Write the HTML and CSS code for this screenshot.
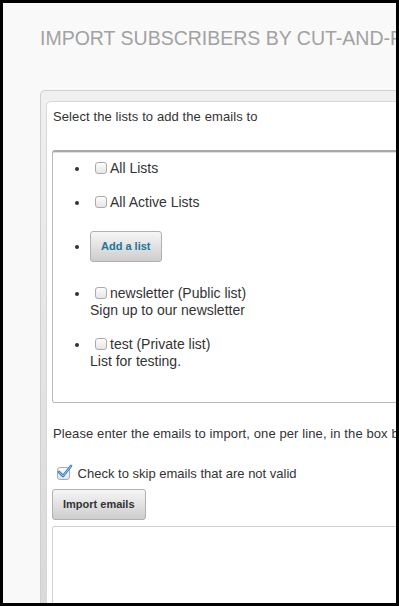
FILE: index.html
```html
<!DOCTYPE html>
<html lang="en">
<head>
	<meta charset="UTF-8">
	<title>Import subscribers</title>
	<link rel="stylesheet" href="styles.css">
</head>
<body>
	<div class="page">
		<h2 class="title">IMPORT SUBSCRIBERS BY CUT-AND-PASTE</h2>
		<div class="panel">
			<div class="inner">
				<p class="intro">Select the lists to add the emails to</p>
				<div class="lists">
					<ul>
						<li><span class="cb"></span>All Lists</li>
						<li><span class="cb"></span>All Active Lists</li>
						<li class="add"><span class="btn blue">Add a list</span></li>
						<li><span class="cb"></span>newsletter (Public list)<br>Sign up to our newsletter</li>
						<li><span class="cb"></span>test (Private list)<br>List for testing.</li>
					</ul>
				</div>
				<p class="hint">Please enter the emails to import, one per line, in the box below and click "Import emails".</p>
				<div class="skip">
					<span class="cb on">
						<svg width="16" height="15" viewBox="0 0 16 15"><path d="M2 8 L6 12 L14 2" fill="none" stroke="#3b7fd0" stroke-width="2.6" stroke-linecap="round" stroke-linejoin="round"/><path d="M2 8 L6 12 L14 2" fill="none" stroke="#9cc6f0" stroke-width="0.9" stroke-linecap="round"/></svg>
					</span>
					Check to skip emails that are not valid
				</div>
				<span class="btn">Import emails</span>
				<div class="area"></div>
			</div>
		</div>
	</div>
</body>
</html>
```

FILE: styles.css
```css
* {
	margin: 0;
	padding: 0;
	box-sizing: border-box;
}
html, body {
	background: #000;
}
body {
	padding: 3px;
	font-family: "Liberation Sans", Arial, sans-serif;
	color: #333;
}
.page {
	height: 600px;
	background: #f9f9f9;
	overflow: hidden;
	padding: 24px 0 0 37px;
}
.title {
	font-size: 19.5px;
	font-weight: normal;
	color: #a2a2a2;
	line-height: 22px;
	white-space: nowrap;
	height: 63px;
}
.panel {
	width: 600px;
	height: 540px;
	border: 1px solid #cfcfcf;
	border-radius: 5px;
	background: linear-gradient(#f0f0f0, #d8d8d8);
	padding: 10px 0 0 5px;
}
.inner {
	height: 600px;
	background: #fff;
	border: 1px solid #d8d8d8;
	border-radius: 5px;
	padding: 7px 0 0 6px;
}
.intro, .hint {
	font-size: 13px;
	line-height: 16px;
	letter-spacing: 0.1px;
	white-space: nowrap;
}
.lists {
	margin: 25px 0 0 -1px;
	border: 1px solid #b8b8b8;
	border-top: 2px solid #a8a8a8;
	border-radius: 3px;
	box-shadow: inset 0 1px 0 #e0e0e0;
	padding: 8px 0 32px 37px;
	font-size: 14px;
	line-height: 17px;
}
.lists li {
	margin-bottom: 17px;
}
.lists li:last-child {
	margin-bottom: 0;
}
.lists li.add {
	margin-top: 20px;
	margin-bottom: 23px;
	height: 31px;
	line-height: 31px;
}
.cb {
	display: inline-block;
	width: 12px;
	height: 12px;
	margin: 0 3px 0 5px;
	border: 1px solid #ababab;
	border-radius: 3px;
	background: linear-gradient(#fcfcfc, #e6e6e6);
	vertical-align: -1px;
	position: relative;
}
.btn {
	display: inline-block;
	height: 31px;
	line-height: 29px;
	padding: 0 10px;
	border: 1px solid #b0b0b0;
	border-radius: 3px;
	background: linear-gradient(#f6f6f6, #cdcdcd);
	font-size: 11px;
	font-weight: bold;
	color: #333;
	vertical-align: top;
}
.btn.blue {
	color: #21759b;
}
.hint {
	margin-top: 23px;
}
.skip {
	margin-top: 24px;
	font-size: 13px;
	line-height: 16px;
	padding-left: 4px;
	white-space: nowrap;
}
.cb.on {
	width: 13px;
	height: 13px;
	margin: 0 4px 0 0;
	vertical-align: -2px;
}
.cb.on svg {
	position: absolute;
	left: -1px;
	top: -4px;
}
.skip + .btn {
	margin-top: 7px;
	margin-left: -1px;
}
.area {
	margin: 6px 0 0 -1px;
	height: 200px;
	border: 1px solid #d0d0d0;
	border-radius: 2px;
}
```
